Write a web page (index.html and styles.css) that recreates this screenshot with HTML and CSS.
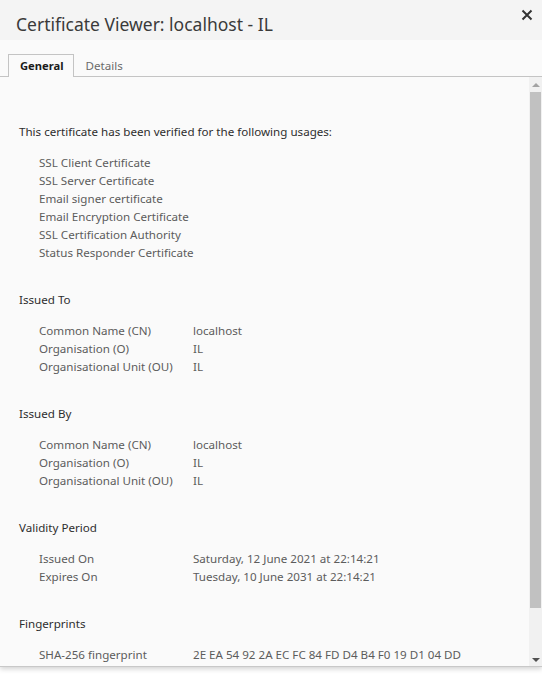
FILE: index.html
```html
<!DOCTYPE html>
<html>
<head>
<meta charset="utf-8">
<link rel="stylesheet" href="styles.css">
</head>
<body>
<div class="window">
  <div class="titlebar">
    <div class="title">Certificate Viewer: localhost - IL</div>
    <div class="close">
      <svg width="12" height="12" viewBox="0 0 12 12"><path d="M1.5 1.5 L10.5 10.5 M10.5 1.5 L1.5 10.5" stroke="#333" stroke-width="2" fill="none"/></svg>
    </div>
  </div>
  <div class="tabs">
    <div class="tab active">General</div>
    <div class="tab">Details</div>
  </div>
  <div class="body">
    <div class="pane">
      <div class="section">
        <div class="heading">This certificate has been verified for the following usages:</div>
        <div class="list">
          <div>SSL Client Certificate</div>
          <div>SSL Server Certificate</div>
          <div>Email signer certificate</div>
          <div>Email Encryption Certificate</div>
          <div>SSL Certification Authority</div>
          <div>Status Responder Certificate</div>
        </div>
      </div>
      <div class="section">
        <div class="heading">Issued To</div>
        <div class="grid">
          <div>Common Name (CN)</div><div>localhost</div>
          <div>Organisation (O)</div><div>IL</div>
          <div>Organisational Unit (OU)</div><div>IL</div>
        </div>
      </div>
      <div class="section">
        <div class="heading">Issued By</div>
        <div class="grid">
          <div>Common Name (CN)</div><div>localhost</div>
          <div>Organisation (O)</div><div>IL</div>
          <div>Organisational Unit (OU)</div><div>IL</div>
        </div>
      </div>
      <div class="section">
        <div class="heading">Validity Period</div>
        <div class="grid">
          <div>Issued On</div><div>Saturday, 12 June 2021 at 22:14:21</div>
          <div>Expires On</div><div>Tuesday, 10 June 2031 at 22:14:21</div>
        </div>
      </div>
      <div class="section">
        <div class="heading">Fingerprints</div>
        <div class="grid">
          <div>SHA-256 fingerprint</div><div>2E EA 54 92 2A EC FC 84 FD D4 B4 F0 19 D1 04 DD</div>
          <div>&nbsp;</div><div>&nbsp;</div>
        </div>
      </div>
    </div>
    <div class="scrollbar">
      <div class="arrow up"></div>
      <div class="thumb"></div>
      <div class="track"></div>
      <div class="arrow down"></div>
    </div>
  </div>
</div>
</body>
</html>
```
FILE: styles.css
```css
html, body {
  margin: 0;
  padding: 0;
  background: #fff;
}
body {
  font-family: "Noto Sans", "DejaVu Sans", sans-serif;
  font-size: 11.6px;
  width: 542px;
  height: 674px;
  overflow: hidden;
}
.window {
  height: 666px;
  background: #fafafa;
  display: flex;
  flex-direction: column;
  border-bottom: 1px solid #c8c8c8;
  box-shadow: 0 2px 5px rgba(0,0,0,0.18);
}
.titlebar {
  height: 40px;
  flex: none;
  background: #f4f4f4;
  display: flex;
  align-items: center;
  justify-content: space-between;
  padding-left: 16px;
  padding-right: 9px;
}
.title {
  font-size: 17.5px;
  color: #3a3a3a;
  padding-top: 7px;
}
.close {
  width: 12px;
  height: 12px;
  margin-top: -11px;
  display: flex;
}
.tabs {
  flex: none;
  margin-top: 14px;
  padding-left: 8px;
  display: flex;
  border-bottom: 1px solid #c4c4c4;
  height: 22px;
}
.tab {
  height: 22px;
  line-height: 22px;
  padding: 0 12px 0 11px;
  color: #6a6a6a;
  border: 1px solid transparent;
  border-bottom: none;
  box-sizing: border-box;
}
.tab.active {
  color: #1a1a1a;
  font-weight: bold;
  font-size: 11.2px;
  border-color: #c4c4c4;
  background: #fafafa;
  height: 23px;
  padding: 0 9px 0 11px;
}
.body {
  flex: 1;
  display: flex;
  min-height: 0;
}
.pane {
  flex: 1;
  overflow: hidden;
  padding: 46px 0 0 19px;
  line-height: 18px;
}
.section {
  margin-bottom: 29px;
}
.heading {
  color: #2e2e2e;
  margin-bottom: 13px;
}
.list, .grid {
  padding-left: 20px;
  color: #5c5c5c;
}
.grid {
  display: grid;
  grid-template-columns: 154px 1fr;
}
.scrollbar {
  width: 13px;
  flex: none;
  background: #f1f1f1;
  display: flex;
  flex-direction: column;
  align-items: center;
  padding-top: 6px;
}
.arrow {
  width: 0;
  height: 0;
  border-left: 4px solid transparent;
  border-right: 4px solid transparent;
}
.arrow.up {
  border-bottom: 4px solid #a3a3a3;
  margin-bottom: 5px;
}
.thumb {
  width: 11px;
  height: 516px;
  background: #c1c1c1;
}
.track {
  flex: 1;
}
.arrow.down {
  border-top: 4px solid #505050;
  margin-bottom: 4px;
}
```
